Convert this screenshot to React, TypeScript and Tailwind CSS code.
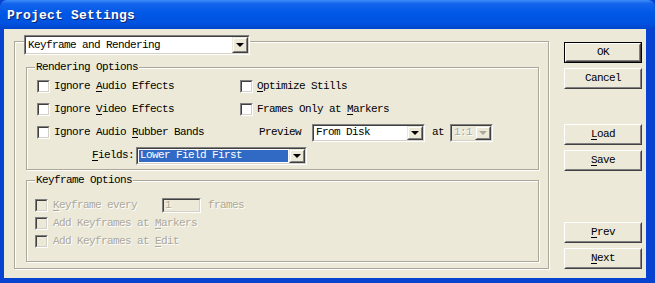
import type { ReactNode } from 'react'

function U({ c }: { c: string }) {
  return <span className="underline underline-offset-[2px]">{c}</span>
}

function Check({ disabled }: { disabled?: boolean }) {
  return (
    <div className="w-[13px] h-[13px] shrink-0 border border-t-[#808080] border-l-[#808080] border-b-white border-r-white">
      <div
        className={`w-full h-full border border-t-[#404040] border-l-[#404040] border-b-[#d4d0c8] border-r-[#d4d0c8] ${
          disabled ? 'bg-[#ece9d8]' : 'bg-white'
        }`}
      />
    </div>
  )
}

function ArrowBtn({ disabled }: { disabled?: boolean }) {
  return (
    <div className="w-[16px] h-full shrink-0 border border-t-[#ece9d8] border-l-[#ece9d8] border-b-[#404040] border-r-[#404040] bg-[#ece9d8]">
      <div className="w-full h-full border border-t-white border-l-white border-b-[#808080] border-r-[#808080] flex items-center justify-center">
        <div
          className={`w-0 h-0 border-l-[4px] border-r-[4px] border-t-[4px] border-l-transparent border-r-transparent ${
            disabled ? 'border-t-[#aca899]' : 'border-t-black'
          }`}
        />
      </div>
    </div>
  )
}

function Combo({
  children,
  className,
  selected,
  disabled,
}: {
  children: ReactNode
  className: string
  selected?: boolean
  disabled?: boolean
}) {
  return (
    <div className={`shrink-0 border border-t-[#808080] border-l-[#808080] border-b-white border-r-white ${className}`}>
      <div className="w-full h-full flex border border-t-[#404040] border-l-[#404040] border-b-[#d4d0c8] border-r-[#d4d0c8]">
        <div className={`flex-1 flex p-[1px] ${disabled ? 'bg-[#ece9d8]' : 'bg-white'}`}>
          <div
            className={`flex-1 flex items-center pl-[1px] whitespace-nowrap overflow-hidden ${
              selected ? 'bg-[#316ac5] text-white' : ''
            } ${disabled ? 'text-[#aca899] [text-shadow:1px_1px_0_#fff]' : ''}`}
          >
            {children}
          </div>
        </div>
        <ArrowBtn disabled={disabled} />
      </div>
    </div>
  )
}

function Btn({ children, def, className = '' }: { children: ReactNode; def?: boolean; className?: string }) {
  return (
    <div className={`h-[21px] w-[78px] ${def ? 'border border-black' : ''} ${className}`}>
      <div className="w-full h-full border border-t-white border-l-white border-b-[#404040] border-r-[#404040]">
        <div className="w-full h-full border border-b-[#808080] border-r-[#808080] border-t-[#ece9d8] border-l-[#ece9d8] flex items-center justify-center">
          {children}
        </div>
      </div>
    </div>
  )
}

const dis = 'text-[#aca899] [text-shadow:1px_1px_0_#fff]'

export default function App() {
  return (
    <div className="w-[655px] h-[283px] flex flex-col bg-[#0842d0] overflow-hidden font-['Liberation_Mono',monospace] text-[11px] tracking-[-0.6px] text-black">
      <div className="h-[29px] shrink-0 flex items-center pl-[7px] pt-[3px] rounded-tl-[7px] rounded-tr-[7px] bg-[linear-gradient(to_bottom,#3d8ef8_0%,#1565ec_12%,#0058e6_45%,#0152e0_80%,#0044cc_100%)]">
        <span className="text-white font-bold text-[13px] tracking-[0.2px] [text-shadow:1px_1px_0_#0a246a]">
          Project Settings
        </span>
      </div>

      <div className="flex-1 flex ml-[4px] mr-[9px] mb-[5px] bg-[#ece9d8]">
        {/* main group */}
        <div className="relative mt-[12px] ml-[10px] w-[535px] h-[228px] border border-[#aca899] shadow-[inset_1px_1px_0_#fff,1px_1px_0_#fff] flex flex-col pl-[11px] pt-[25px]">
          <Combo className="absolute left-[9px] -top-[7px] w-[226px] h-[20px]">Keyframe and Rendering</Combo>

          {/* Rendering options */}
          <div className="relative w-[513px] h-[103px] border border-[#aca899] shadow-[inset_1px_1px_0_#fff,1px_1px_0_#fff] flex flex-col pt-[7px] pl-[10px]">
            <span className="absolute left-[8px] -top-[8px] px-[1px] bg-[#ece9d8] leading-[14px]">Rendering Options</span>

            <div className="h-[23px] flex items-center">
              <div className="w-[203px] flex items-center gap-[4px]">
                <Check />
                <span>
                  Ignore <U c="A" />udio Effects
                </span>
              </div>
              <div className="flex items-center gap-[4px]">
                <Check />
                <span>
                  <U c="O" />ptimize Stills
                </span>
              </div>
            </div>

            <div className="h-[23px] flex items-center">
              <div className="w-[203px] flex items-center gap-[4px]">
                <Check />
                <span>
                  Ignore <U c="V" />ideo Effects
                </span>
              </div>
              <div className="flex items-center gap-[4px]">
                <Check />
                <span>
                  Frames Only at <U c="M" />arkers
                </span>
              </div>
            </div>

            <div className="h-[23px] flex items-center">
              <div className="w-[203px] flex items-center gap-[4px]">
                <Check />
                <span>
                  Ignore Audio <U c="R" />ubber Bands
                </span>
              </div>
              <div className="flex items-center">
                <span className="ml-[19px]">Preview</span>
                <Combo className="ml-[11px] w-[113px] h-[18px]">From Disk</Combo>
                <span className="ml-[7px]">at</span>
                <Combo className="ml-[6px] w-[43px] h-[18px]" disabled>
                  1:1
                </Combo>
              </div>
            </div>

            <div className="h-[23px] flex items-center">
              <span className="ml-[55px]">
                <U c="F" />ields:
              </span>
              <Combo className="ml-[2px] w-[171px] h-[18px]" selected>
                Lower Field First
              </Combo>
            </div>
          </div>

          {/* Keyframe options */}
          <div className="relative mt-[10px] w-[513px] h-[82px] border border-[#aca899] shadow-[inset_1px_1px_0_#fff,1px_1px_0_#fff] flex flex-col pt-[15px] pl-[8px]">
            <span className="absolute left-[8px] -top-[8px] px-[1px] bg-[#ece9d8] leading-[14px]">Keyframe Options</span>

            <div className="h-[18px] flex items-center">
              <Check disabled />
              <span className={`ml-[5px] ${dis}`}>
                <U c="K" />eyframe every
              </span>
              <div className="ml-[25px] w-[39px] h-[15px] border border-t-[#808080] border-l-[#808080] border-b-white border-r-white">
                <div className={`w-full h-full border border-t-[#404040] border-l-[#404040] border-b-[#d4d0c8] border-r-[#d4d0c8] flex items-center pl-[1px] ${dis}`}>
                  1
                </div>
              </div>
              <span className={`ml-[7px] ${dis}`}>frames</span>
            </div>
            <div className="h-[18px] flex items-center">
              <Check disabled />
              <span className={`ml-[5px] ${dis}`}>
                Add Keyframes at <U c="M" />arkers
              </span>
            </div>
            <div className="h-[18px] flex items-center">
              <Check disabled />
              <span className={`ml-[5px] ${dis}`}>
                Add Keyframes at <U c="E" />dit
              </span>
            </div>
          </div>
        </div>

        {/* buttons */}
        <div className="ml-[15px] mt-[13px] w-[78px] flex flex-col">
          <Btn def>OK</Btn>
          <Btn className="mt-[5px]">Cancel</Btn>
          <Btn className="mt-[35px]">
            <span>
              <U c="L" />oad
            </span>
          </Btn>
          <Btn className="mt-[5px]">
            <span>
              <U c="S" />ave
            </span>
          </Btn>
          <Btn className="mt-[51px]">
            <span>
              <U c="P" />rev
            </span>
          </Btn>
          <Btn className="mt-[5px]">
            <span>
              <U c="N" />ext
            </span>
          </Btn>
        </div>
      </div>
    </div>
  )
}
